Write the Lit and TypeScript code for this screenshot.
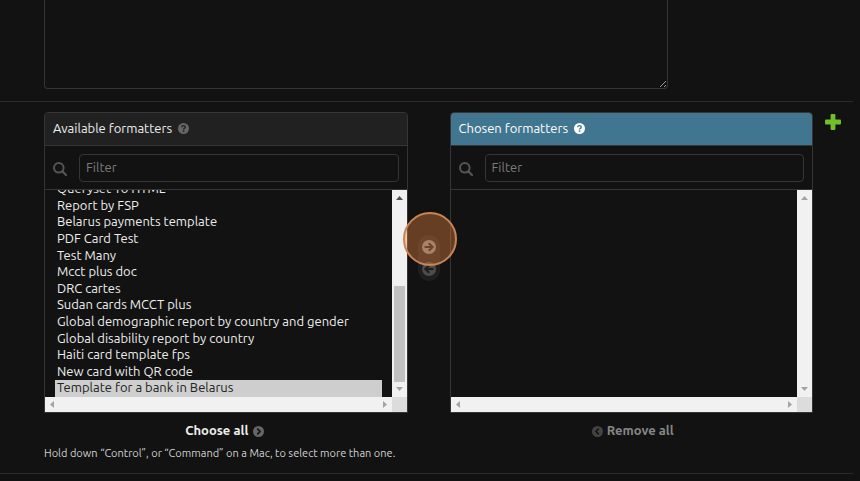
import { LitElement, html, css, svg } from "lit";
import { customElement } from "lit/decorators.js";

const discIcon = (size: number, disc: string, glyph: unknown) => html`
  <svg class="icon" width=${size} height=${size} viewBox="0 0 14 14" aria-hidden="true">
    <circle cx="7" cy="7" r="7" fill=${disc}></circle>${glyph}
  </svg>`;

const question = (ink: string) => svg`
  <path d="M4.7 5.4Q4.9 3.3 7 3.3Q9.2 3.3 9.2 5.2Q9.2 6.3 8 6.9Q7.1 7.3 7.1 8.3" fill="none" stroke=${ink} stroke-width="1.8"></path>
  <rect x="6.1" y="9.3" width="2" height="1.9" fill=${ink}></rect>`;

const arrow = (ink: string) => svg`
  <path d="M2.6 7H10M6.8 3.2L10.6 7L6.8 10.8" fill="none" stroke=${ink} stroke-width="2.1"></path>`;
const arrowBack = (ink: string) => svg`
  <path d="M11.4 7H4M7.2 3.2L3.4 7L7.2 10.8" fill="none" stroke=${ink} stroke-width="2.1"></path>`;
const chevron = (ink: string) => svg`
  <path d="M5.4 3.4L9 7L5.4 10.6" fill="none" stroke=${ink} stroke-width="2"></path>`;
const chevronBack = (ink: string) => svg`
  <path d="M8.6 3.4L5 7L8.6 10.6" fill="none" stroke=${ink} stroke-width="2"></path>`;

const tri = (points: string, fill = "#a3a3a3") => html`
  <svg class="tri" width="15" height="15" viewBox="0 0 15 15" aria-hidden="true">
    <polygon points=${points} fill=${fill}></polygon>
  </svg>`;
const UP = "4,10 11,10 7.5,6";
const DOWN = "4,5 11,5 7.5,9";
const LEFT = "9,4 9,11 5,7.5";
const RIGHT = "6,4 6,11 10,7.5";

const formatters = [
  "Queryset To HTML",
  "Report by FSP",
  "Belarus payments template",
  "PDF Card Test",
  "Test Many",
  "Mcct plus doc",
  "DRC cartes",
  "Sudan cards MCCT plus",
  "Global demographic report by country and gender",
  "Global disability report by country",
  "Haiti card template fps",
  "New card with QR code",
  "Template for a bank in Belarus",
];

@customElement("app-root")
export class AppRoot extends LitElement {
  static styles = css`
    * { box-sizing: border-box; }
    :host {
      display: block;
      min-height: 100vh;
      background: #121212;
      color: #eeeeee;
      font: 13px/16px Ubuntu, "Noto Sans", sans-serif;
    }
    button, input, select, textarea { font: inherit; color: inherit; margin: 0; }
    button { border: 0; padding: 0; background: none; }
    .row {
      padding: 0 0 12px 44px;
      margin-right: 7px;
      border-bottom: 1px solid #2b2b2b;
    }
    .text {
      display: block;
      width: 624px;
      max-width: 100%;
      height: 89px;
      background: #121212;
      border: 1px solid #353535;
      border-top: 0;
      border-radius: 0 0 4px 4px;
      resize: both;
    }
    .widget { display: flex; align-items: flex-start; padding-top: 10px; }
    .selector { display: flex; flex: 1; min-width: 0; }
    .side { flex: 1; min-width: 0; }
    .box {
      border: 1px solid #353535;
      border-radius: 4px 4px 0 0;
    }
    .title {
      display: flex;
      align-items: center;
      gap: 6px;
      height: 33px;
      padding: 0 8px 2px;
      margin: 0;
      font-size: 13px;
      font-weight: 400;
      background: #212121;
      border-bottom: 1px solid #353535;
      border-radius: 3px 3px 0 0;
    }
    .chosen .title { background: #417690; color: #ffffff; }
    .icon { display: block; flex: none; }
    .filter {
      display: flex;
      align-items: center;
      gap: 12px;
      height: 44px;
      padding: 0 8px;
      border-bottom: 1px solid #353535;
    }
    .filter .icon { margin-top: 2px; }
    .search {
      flex: 1;
      min-width: 0;
      height: 28px;
      padding: 0 6px 2px;
      background: #121212;
      border: 1px solid #353535;
      border-radius: 4px;
    }
    .search::placeholder { color: #7c7c7c; opacity: 1; }
    .pane {
      display: grid;
      grid-template-columns: 1fr 15px;
      grid-template-rows: 207px 15px;
    }
    .view { display: flex; align-items: flex-end; overflow: hidden; min-width: 0; }
    .list {
      width: 100%;
      height: auto;
      padding: 0 10px;
      background: #121212;
      border: 0;
      outline: 0;
      overflow: hidden;
    }
    .list option { box-sizing: content-box; }
    .list option:checked { background: #cecece linear-gradient(#cecece, #cecece); color: #222222; }
    .bar { display: flex; justify-content: space-between; background: #f1f1f1; }
    .vertical { flex-direction: column; }
    .tri { display: block; flex: none; }
    .thumb { height: 96px; margin: auto 2px 0; background: #c1c1c1; }
    .corner { background: #dcdcdc; }
    .chooser {
      position: relative;
      width: 42px;
      flex: none;
      display: flex;
      flex-direction: column;
      align-items: center;
      padding-top: 123px;
    }
    .moves {
      display: flex;
      flex-direction: column;
      gap: 8px;
      padding: 5px 4px;
      background: #1e1e1e;
      border-radius: 11px;
    }
    .spot {
      position: absolute;
      top: 100px;
      left: -5px;
      width: 54px;
      height: 54px;
      border-radius: 50%;
      border: 2px solid #c98554;
      background: rgba(236, 134, 64, 0.38);
      pointer-events: none;
    }
    .all {
      display: flex;
      align-items: center;
      gap: 5px;
      margin: 9px auto 0;
      padding-right: 2px;
      font-weight: 700;
    }
    .all .icon { margin-top: 2px; }
    .chosen .all { gap: 4px; padding: 0 0 0 3px; color: #868686; }
    .add { flex: none; width: 40px; padding: 2px 0 0 12px; }
    .help { margin: 7px 0 0; font-size: 11px; line-height: 16px; color: #d0d0d0; }
  `;

  private lens() {
    return html`<svg class="icon" width="14" height="14" viewBox="1 1 14 14" aria-hidden="true">
      <circle cx="6.8" cy="6.8" r="4.8" fill="none" stroke="#555555" stroke-width="2"></circle>
      <path d="M10.4 10.4L14 14" stroke="#555555" stroke-width="2.2" stroke-linecap="round"></path>
    </svg>`;
  }

  private pane(label: string, items: string[]) {
    const active = items.length > 0;
    return html`<div class="pane">
      <div class="view">
        <select class="list" multiple size="13" aria-label=${label}>
          ${items.map((t, i) => html`<option ?selected=${i === items.length - 1}>${t}</option>`)}
        </select>
      </div>
      <div class="bar vertical">
        ${tri(UP, active ? "#505050" : "#a3a3a3")}
        ${active ? html`<div class="thumb"></div>` : ""}
        ${tri(DOWN)}
      </div>
      <div class="bar">${tri(LEFT)}${tri(RIGHT)}</div>
      <div class="corner"></div>
    </div>`;
  }

  render() {
    return html`
      <div class="row"><textarea class="text" aria-label="Description"></textarea></div>
      <div class="row">
        <div class="widget">
          <div class="selector">
            <div class="side">
              <div class="box">
                <h2 class="title">Available formatters ${discIcon(11, "#666666", question("#212121"))}</h2>
                <label class="filter">${this.lens()}<input class="search" type="text" placeholder="Filter" aria-label="Filter available" /></label>
                ${this.pane("Available formatters", formatters)}
              </div>
              <button class="all">Choose all ${discIcon(11, "#666666", chevron("#121212"))}</button>
            </div>
            <div class="chooser">
              <div class="moves">
                <button aria-label="Choose">${discIcon(14, "#808080", arrow("#1e1e1e"))}</button>
                <button aria-label="Remove">${discIcon(14, "#4c4c4c", arrowBack("#1e1e1e"))}</button>
              </div>
              <div class="spot"></div>
            </div>
            <div class="side chosen">
              <div class="box">
                <h2 class="title">Chosen formatters ${discIcon(11, "#ffffff", question("#417690"))}</h2>
                <label class="filter">${this.lens()}<input class="search" type="text" placeholder="Filter" aria-label="Filter chosen" /></label>
                ${this.pane("Chosen formatters", [])}
              </div>
              <button class="all">${discIcon(11, "#444444", chevronBack("#121212"))} Remove all</button>
            </div>
          </div>
          <a class="add" href="#" aria-label="Add another formatter">
            <svg class="icon" width="16" height="16" viewBox="0 0 16 16" fill="#70bf2b">
              <rect x="5.6" y="0" width="4.8" height="16" rx="1"></rect>
              <rect x="0" y="5.6" width="16" height="4.8" rx="1"></rect>
            </svg>
          </a>
        </div>
        <p class="help">Hold down “Control”, or “Command” on a Mac, to select more than one.</p>
      </div>
    `;
  }
}
